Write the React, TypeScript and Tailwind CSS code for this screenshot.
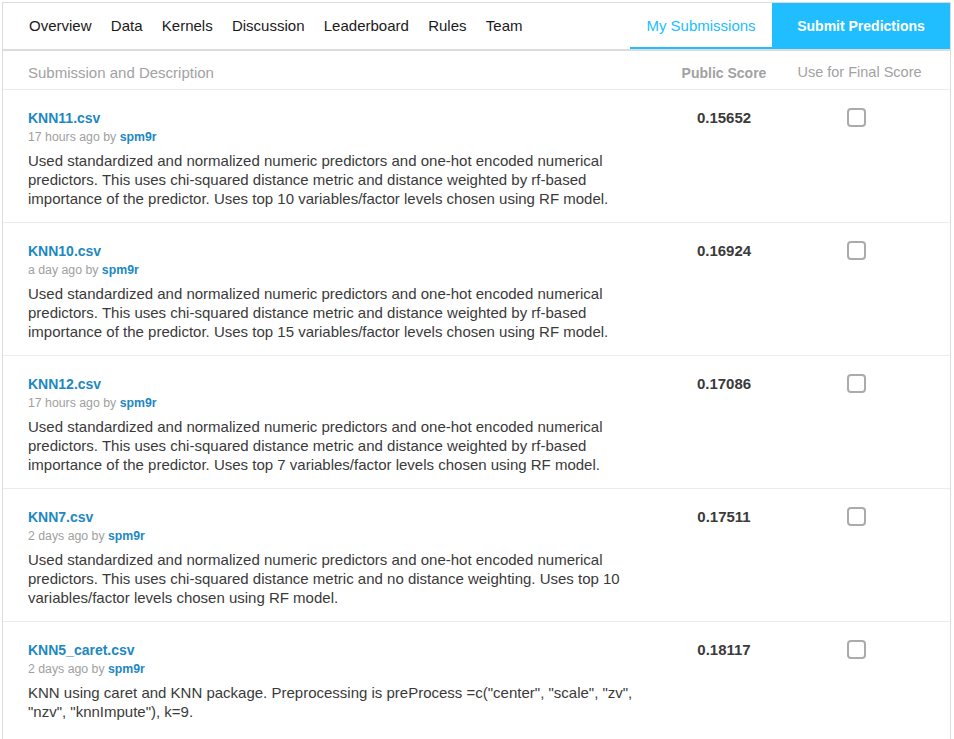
import React from "react";

const rows = [
  {
    name: "KNN11.csv",
    when: "17 hours ago",
    score: "0.15652",
    lines: [
      "Used standardized and normalized numeric predictors and one-hot encoded numerical",
      "predictors. This uses chi-squared distance metric and distance weighted by rf-based",
      "importance of the predictor. Uses top 10 variables/factor levels chosen using RF model.",
    ],
  },
  {
    name: "KNN10.csv",
    when: "a day ago",
    score: "0.16924",
    lines: [
      "Used standardized and normalized numeric predictors and one-hot encoded numerical",
      "predictors. This uses chi-squared distance metric and distance weighted by rf-based",
      "importance of the predictor. Uses top 15 variables/factor levels chosen using RF model.",
    ],
  },
  {
    name: "KNN12.csv",
    when: "17 hours ago",
    score: "0.17086",
    lines: [
      "Used standardized and normalized numeric predictors and one-hot encoded numerical",
      "predictors. This uses chi-squared distance metric and distance weighted by rf-based",
      "importance of the predictor. Uses top 7 variables/factor levels chosen using RF model.",
    ],
  },
  {
    name: "KNN7.csv",
    when: "2 days ago",
    score: "0.17511",
    lines: [
      "Used standardized and normalized numeric predictors and one-hot encoded numerical",
      "predictors. This uses chi-squared distance metric and no distance weighting. Uses top 10",
      "variables/factor levels chosen using RF model.",
    ],
  },
  {
    name: "KNN5_caret.csv",
    when: "2 days ago",
    score: "0.18117",
    lines: [
      'KNN using caret and KNN package. Preprocessing is preProcess =c("center", "scale", "zv",',
      '"nzv", "knnImpute"), k=9.',
    ],
  },
];

const navItems = ["Overview", "Data", "Kernels", "Discussion", "Leaderboard", "Rules", "Team"];

export default function App() {
  return (
    <div
      className="w-[954px] h-[739px] overflow-hidden bg-white pt-[2px]"
      style={{ fontFamily: '"Liberation Sans", Arial, sans-serif' }}
    >
      <div className="ml-[2px] w-[949px] border-t border-l border-r border-[#dcdcdc] min-h-[740px]">
        {/* Nav */}
        <div className="flex h-[48px] items-stretch border-b-2 border-[#dcdcdc]">
          <div className="flex flex-1 items-center gap-[19.3px] pl-[26px] text-[15px] text-[#1a1a1a]">
            {navItems.map((n) => (
              <span key={n}>{n}</span>
            ))}
          </div>
          <div className="flex w-[142px] items-center justify-center border-b-2 border-[#20beff] pt-[2px] text-[15px] text-[#20beff]">
            My Submissions
          </div>
          <div className="flex w-[178px] items-center justify-center bg-[#20beff] text-[14px] font-bold text-white">
            Submit Predictions
          </div>
        </div>
        {/* Header row */}
        <div className="flex h-[39px] items-center border-b border-[#ececec] pt-[6px]">
          <div className="w-[676px] pl-[25px] text-[15px] text-[#a2a2a2]">Submission and Description</div>
          <div className="w-[90px] text-center text-[14px] font-bold text-[#a2a2a2]">Public Score</div>
          <div className="w-[181px] text-center text-[14.5px] text-[#a2a2a2]">Use for Final Score</div>
        </div>
        {rows.map((r) => (
          <div key={r.name} className="flex h-[133px] border-b border-[#ececec] pt-[18px]">
            <div className="w-[676px] pl-[25px]">
              <div className="text-[14px] font-bold leading-[20px] text-[#1d88c2]">{r.name}</div>
              <div className="mt-[1px] text-[12.3px] leading-[16px] text-[#a0a0a0]">
                {r.when} by <span className="font-bold text-[#1d88c2]">spm9r</span>
              </div>
              <div className="mt-[6px] text-[15px] leading-[19px] text-[#3a3a3a]">
                {r.lines.map((l, i) => (
                  <div key={i} className="whitespace-nowrap">
                    {l}
                  </div>
                ))}
              </div>
            </div>
            <div className="w-[90px] text-center text-[15px] font-bold leading-[20px] text-[#3a3a3a]">{r.score}</div>
            <div className="flex w-[181px] justify-center">
              <div className="mr-[6px] h-[19px] w-[19px] rounded-[4px] border-2 border-[#ababab] bg-white" />
            </div>
          </div>
        ))}
      </div>
    </div>
  );
}
